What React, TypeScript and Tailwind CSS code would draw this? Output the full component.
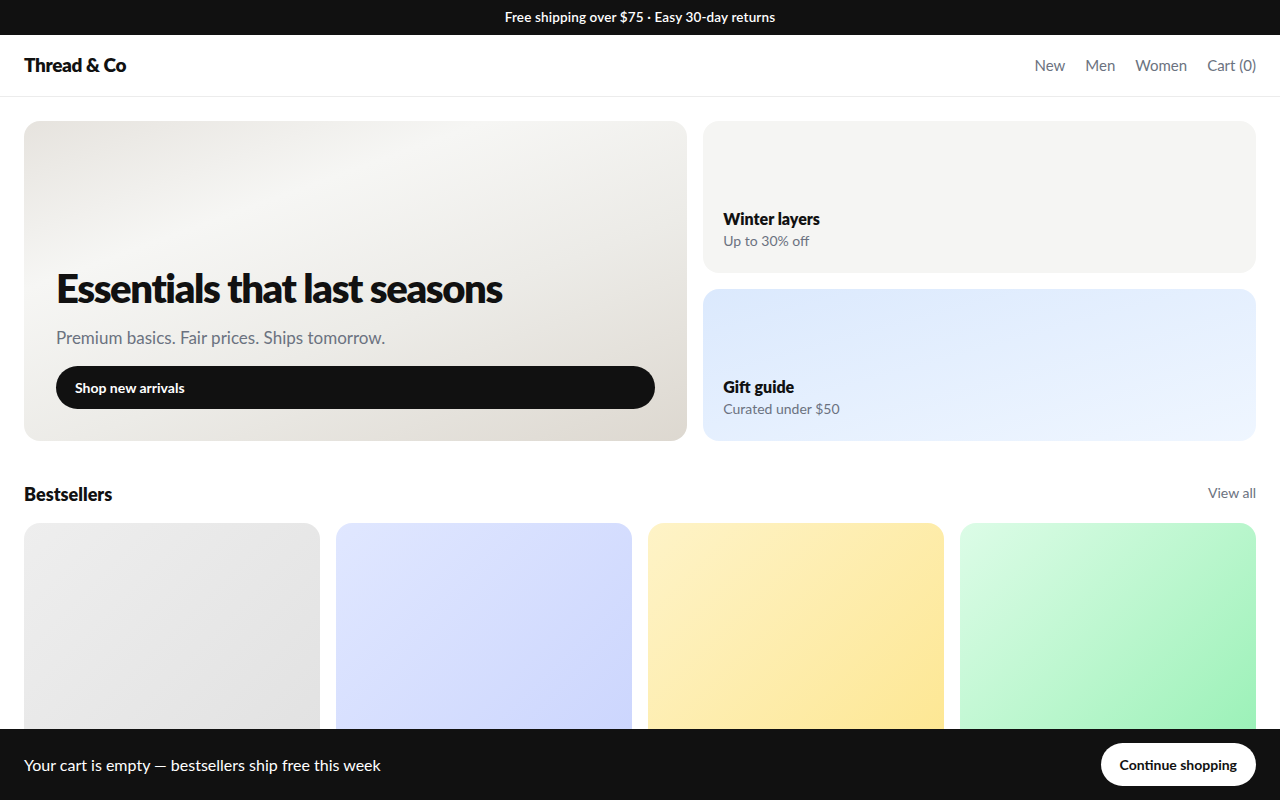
const products = [
  { name: "Heavyweight Tee", bg: "bg-gradient-to-br from-[#eeeeee] to-[#e0e0e0]" },
  { name: "Everyday Oxford", bg: "bg-gradient-to-br from-[#e0e7ff] to-[#c9d3fd]" },
  { name: "Merino Crew", bg: "bg-gradient-to-br from-[#fef3c7] to-[#fde58a]" },
  { name: "Relaxed Chino", bg: "bg-gradient-to-br from-[#dcfce7] to-[#8fefb0]" },
];

function App() {
  return (
    <div className="min-h-screen bg-white text-[#111] font-['Lato','Inter',sans-serif]">
      <div className="h-[35px] bg-[#111] flex items-center justify-center text-[13.5px] font-semibold tracking-[0.01em] text-white">
        Free shipping over $75 · Easy 30-day returns
      </div>
      <header className="h-[62px] border-b border-[#ececec] px-6 flex items-center justify-between">
        <span className="text-[19px] font-extrabold tracking-[-0.02em] -mt-px">Thread &amp; Co</span>
        <nav className="flex gap-5 text-[15px] text-[#6b7280] -mt-px">
          <a>New</a>
          <a>Men</a>
          <a>Women</a>
          <a>Cart (0)</a>
        </nav>
      </header>

      <main className="px-6 pt-6 pb-28">
        <section className="grid grid-cols-[6fr_5fr] gap-4 h-[320px]">
          <div className="rounded-2xl bg-[linear-gradient(160deg,#e6e3de_0%,#f6f6f4_30%,#ecebe7_60%,#ddd8d0_100%)] p-8 flex flex-col justify-end">
            <h1 className="text-[40px] leading-[48px] font-extrabold tracking-[-0.035em]">Essentials that last seasons</h1>
            <p className="mt-[13px] text-[17px] text-[#6b7280]">Premium basics. Fair prices. Ships tomorrow.</p>
            <button className="mt-4 h-[43px] rounded-full bg-[#111] text-white text-[14px] font-bold text-left px-[19px]">
              Shop new arrivals
            </button>
          </div>
          <div className="grid grid-rows-2 gap-4">
            <div className="rounded-2xl bg-[#f5f5f3] px-5 pb-[22px] flex flex-col justify-end">
              <h3 className="text-[16px] font-extrabold leading-6">Winter layers</h3>
              <p className="text-[14px] text-[#6b7280] leading-5">Up to 30% off</p>
            </div>
            <div className="rounded-2xl bg-gradient-to-br from-[#dbe9fd] to-[#eff6ff] px-5 pb-[22px] flex flex-col justify-end">
              <h3 className="text-[16px] font-extrabold leading-6">Gift guide</h3>
              <p className="text-[14px] text-[#6b7280] leading-5">Curated under $50</p>
            </div>
          </div>
        </section>

        <section className="mt-[40px]">
          <div className="flex items-center justify-between mb-4">
            <h2 className="text-[18px] font-extrabold leading-[26px]">Bestsellers</h2>
            <a className="text-[14px] text-[#6b7280] -mt-1">View all</a>
          </div>
          <div className="grid grid-cols-4 gap-4">
            {products.map((p) => (
              <div key={p.name} aria-label={p.name} className={`aspect-square rounded-2xl ${p.bg}`} />
            ))}
          </div>
        </section>
      </main>

      <div className="fixed bottom-0 inset-x-0 h-[71px] bg-[#111] px-6 flex items-center justify-between">
        <span className="text-[16px] text-white">Your cart is empty — bestsellers ship free this week</span>
        <button className="h-[43px] px-[19px] rounded-full bg-white text-[14px] font-bold text-[#111]">
          Continue shopping
        </button>
      </div>
    </div>
  );
}

export default App;
